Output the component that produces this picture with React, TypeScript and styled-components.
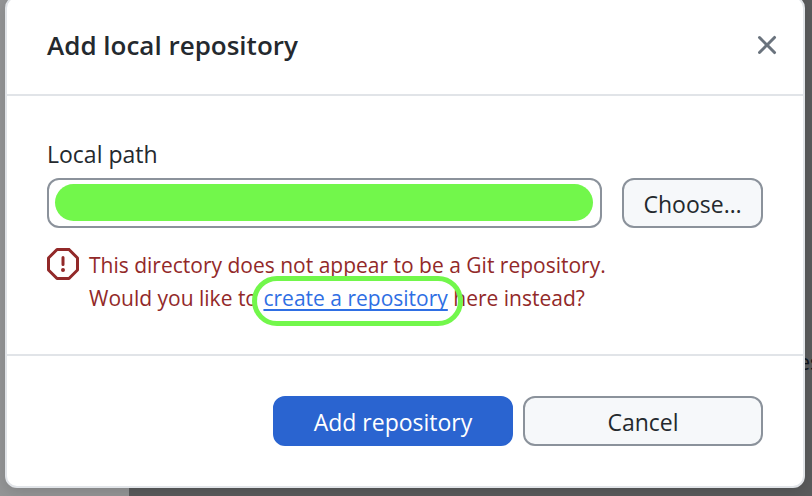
import React from "react";
import styled, { createGlobalStyle } from "styled-components";

const GlobalStyle = createGlobalStyle`
  *, *::before, *::after { box-sizing: border-box; }
  body {
    margin: 0;
    background: #5a5b5c;
    font-family: "Open Sans", "Noto Sans", sans-serif;
    font-size: 23px;
    color: #24292e;
  }
`;

const Screen = styled.div`
  display: grid;
  min-height: 100vh;
  overflow: hidden;
`;

const AppWindow = styled.div`
  grid-area: 1 / 1;
  display: grid;
  grid-template-columns: 129px minmax(0, 1fr);
`;

const Sidebar = styled.aside`
  background: #949596;
`;

const Content = styled.main`
  display: flex;
  justify-content: flex-end;
  align-items: flex-start;
  padding-top: 346px;
  background: #5a5b5c;
  color: #10151d;
  font-size: 21px;
  line-height: 33px;
  overflow: hidden;
`;

const ClippedText = styled.span`
  margin-right: -8px;
`;

const Dialog = styled.form`
  grid-area: 1 / 1;
  z-index: 1;
  align-self: start;
  min-width: 0;
  margin: -4px 7px 8px 5px;
  background: #fff;
  border: 2px solid #e1e4e8;
  border-radius: 12px;
  box-shadow: 0 4px 14px rgba(0, 0, 0, 0.12);
`;

const Header = styled.header`
  display: flex;
  align-items: center;
  justify-content: space-between;
  height: 98px;
  padding: 0 20px 2px 40px;
  border-bottom: 2px solid #e1e4e8;
`;

const Title = styled.h1`
  margin: 0;
  font-size: 26px;
  font-weight: 600;
  line-height: 36px;
`;

const CloseButton = styled.button`
  display: flex;
  padding: 0;
  border: 0;
  background: none;
  color: #6a737d;
`;

const Body = styled.div`
  padding: 42px 40px 39px;
`;

const Label = styled.label`
  display: block;
  line-height: 32px;
  margin-bottom: 8px;
`;

const PathRow = styled.div`
  display: flex;
  gap: 20px;
`;

const PathField = styled.div`
  position: relative;
  flex: 1;
  min-width: 0;
`;

const PathInput = styled.input`
  display: block;
  width: 100%;
  height: 50px;
  padding: 0 12px;
  border: 2px solid #8b929b;
  border-radius: 12px;
  background: #fff;
  color: inherit;
  font: inherit;
`;

const Redaction = styled.span`
  position: absolute;
  inset: 6px 9px 7px 8px;
  border-radius: 20px;
  background: #72f74b;
`;

const Button = styled.button<{ $primary?: boolean; $width: number }>`
  width: ${(p) => p.$width}px;
  height: 50px;
  padding: 2px 0 0;
  border: 2px solid ${(p) => (p.$primary ? "#2a64d0" : "#8b929b")};
  border-radius: 12px;
  background: ${(p) => (p.$primary ? "#2a64d0" : "#f6f8fa")};
  color: ${(p) => (p.$primary ? "#fff" : "#24292e")};
  font: inherit;
`;

const ErrorMessage = styled.div`
  display: flex;
  gap: 10px;
  margin-top: 20px;
  color: #922929;
`;

const ErrorText = styled.p`
  margin: 0;
  padding-top: 1px;
  font-size: 21px;
  line-height: 33px;
`;

const CreateLink = styled.a`
  position: relative;
  color: #2f6fe4;
  text-decoration: underline;
  text-decoration-thickness: 2px;
  text-decoration-skip-ink: none;
  text-underline-offset: 3px;

  &::after {
    content: "";
    position: absolute;
    inset: -8px -15px -14px -11px;
    border: 5px solid #72f74b;
    border-radius: 25px;
  }
`;

const Footer = styled.footer`
  display: flex;
  justify-content: flex-end;
  gap: 10px;
  padding: 40px;
  border-top: 2px solid #e1e4e8;
`;

const CloseIcon = () => (
  <svg width="32" height="32" viewBox="0 0 16 16" fill="currentColor" aria-hidden="true">
    <path d="M3.72 3.72a.75.75 0 0 1 1.06 0L8 6.94l3.22-3.22a.75.75 0 1 1 1.06 1.06L9.06 8l3.22 3.22a.75.75 0 1 1-1.06 1.06L8 9.06l-3.22 3.22a.75.75 0 0 1-1.06-1.06L6.94 8 3.72 4.78a.75.75 0 0 1 0-1.06Z" />
  </svg>
);

const StopIcon = styled.svg`
  flex: none;
`;

export default function App() {
  return (
    <>
      <GlobalStyle />
      <Screen>
        <AppWindow aria-hidden="true">
          <Sidebar />
          <Content>
            <ClippedText>es</ClippedText>
          </Content>
        </AppWindow>
        <Dialog role="dialog" aria-labelledby="dialog-title" onSubmit={(e) => e.preventDefault()}>
          <Header>
            <Title id="dialog-title">Add local repository</Title>
            <CloseButton type="button" aria-label="Close">
              <CloseIcon />
            </CloseButton>
          </Header>
          <Body>
            <Label htmlFor="local-path">Local path</Label>
            <PathRow>
              <PathField>
                <PathInput id="local-path" type="text" />
                <Redaction />
              </PathField>
              <Button type="button" $width={141}>Choose…</Button>
            </PathRow>
            <ErrorMessage role="alert">
              <StopIcon width="32" height="32" viewBox="0 0 16 16" fill="currentColor" aria-hidden="true">
                <path d="M4.47.22A.749.749 0 0 1 5 0h6c.199 0 .389.079.53.22l4.25 4.25c.141.14.22.331.22.53v6a.749.749 0 0 1-.22.53l-4.25 4.25A.749.749 0 0 1 11 16H5a.749.749 0 0 1-.53-.22L.22 11.53A.749.749 0 0 1 0 11V5c0-.199.079-.389.22-.53Zm.84 1.28L1.5 5.31v5.38l3.81 3.81h5.38l3.81-3.81V5.31L10.69 1.5ZM8 4a.75.75 0 0 1 .75.75v3.5a.75.75 0 0 1-1.5 0v-3.5A.75.75 0 0 1 8 4Zm0 8a1 1 0 1 1 0-2 1 1 0 0 1 0 2Z" />
              </StopIcon>
              <ErrorText>
                This directory does not appear to be a Git repository.
                <br />
                Would you like to <CreateLink href="#create">create a repository</CreateLink> here instead?
              </ErrorText>
            </ErrorMessage>
          </Body>
          <Footer>
            <Button type="submit" $primary $width={240}>Add repository</Button>
            <Button type="button" $width={240}>Cancel</Button>
          </Footer>
        </Dialog>
      </Screen>
    </>
  );
}
